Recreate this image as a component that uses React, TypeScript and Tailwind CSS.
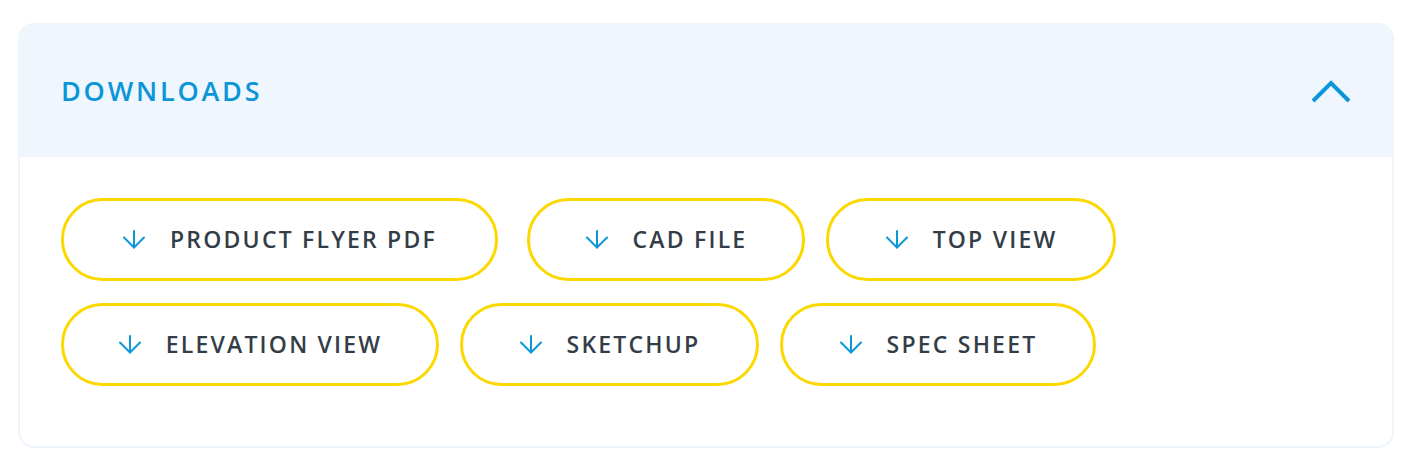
import { useState } from "react";

const FILES = [
  { label: "PRODUCT FLYER PDF", width: "w-[437px]", extra: "mr-[8px]" },
  { label: "CAD FILE", width: "w-[278px]", extra: "" },
  { label: "TOP VIEW", width: "w-[290px]", extra: "" },
  { label: "ELEVATION VIEW", width: "w-[378px]", extra: "" },
  { label: "SKETCHUP", width: "w-[299px]", extra: "" },
  { label: "SPEC SHEET", width: "w-[316px]", extra: "" },
];

const ArrowDown = () => (
  <svg width="24" height="19" viewBox="0 0 24 19" fill="none" className="shrink-0">
    <path d="M12 1v16.5" stroke="#0a96d8" strokeWidth="2" strokeLinecap="round" />
    <path d="M2 7.5l10 10 10-10" stroke="#0a96d8" strokeWidth="2" strokeLinecap="round" strokeLinejoin="round" />
  </svg>
);

const App = () => {
  const [open, setOpen] = useState(true);

  return (
    <div className="min-h-screen bg-white pt-[23px] pl-[18px] font-['Open_Sans',sans-serif]">
      <div className="w-[1376px] rounded-[16px] border-2 border-[#edf4fc] overflow-hidden">
        <button
          type="button"
          onClick={() => setOpen(!open)}
          className="w-full h-[132px] bg-[#eff6fe] flex items-center justify-between pl-[41px] pr-[40px]"
        >
          <span className="text-[27px] font-semibold tracking-[2.8px] text-[#0a96d8]">
            DOWNLOADS
          </span>
          <svg width="42" height="26" viewBox="0 0 42 26" fill="none">
            <path
              d={open ? "M3 23L21 5l18 18" : "M3 5l18 18L39 5"}
              stroke="#0a96d8"
              strokeWidth="4"
            />
          </svg>
        </button>

        {open && (
          <div className="px-[41px] pt-[41px] pb-[60px] flex flex-wrap gap-x-[21px] gap-y-[22px]">
            {FILES.map((f) => (
              <a
                key={f.label}
                href="#"
                className={`${f.width} ${f.extra} h-[83px] rounded-full border-[3px] border-[#fdd800] flex items-center justify-center gap-[24px]`}
              >
                <ArrowDown />
                <span className="text-[23px] font-semibold tracking-[2.2px] text-[#333d47]">
                  {f.label}
                </span>
              </a>
            ))}
          </div>
        )}
      </div>
    </div>
  );
};

export default App;
